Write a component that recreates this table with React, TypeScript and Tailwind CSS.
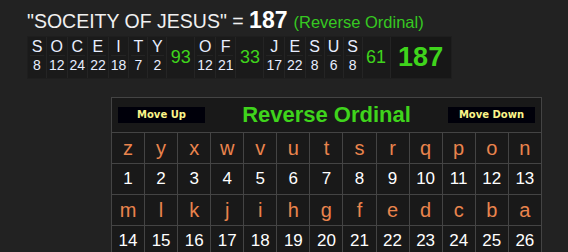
import React from "react";

type Word = { letters: [string, number][]; sum: number };

const words: Word[] = [
  { letters: [["S", 8], ["O", 12], ["C", 24], ["E", 22], ["I", 18], ["T", 7], ["Y", 2]], sum: 93 },
  { letters: [["O", 12], ["F", 21]], sum: 33 },
  { letters: [["J", 17], ["E", 22], ["S", 8], ["U", 6], ["S", 8]], sum: 61 },
];

const rowA = "zyxwvutsrqpon".split("");
const rowB = "mlkjihgfedcba".split("");

const Breakdown = () => (
  <div className="flex bg-[#1a1a1a] border border-[#1e1e1e] w-max">
    {words.map((w, wi) => (
      <React.Fragment key={wi}>
        {w.letters.map(([l, v], i) => (
          <div key={i} className="flex flex-col min-w-[19px] px-[2px] border-r border-[#242424]">
            <span className="h-[19px] leading-[19px] text-center text-[16px] text-[#e8eeff] border-b border-[#242424]">{l}</span>
            <span className="h-[19px] leading-[19px] text-center text-[14px] text-[#e8eeff]">{v}</span>
          </div>
        ))}
        <div className="flex items-center justify-center w-[28px] text-[18px] text-[#3fd41c] border-r border-[#242424]">
          {w.sum}
        </div>
      </React.Fragment>
    ))}
    <div className="flex items-center justify-center w-[60px] bg-[#171717] text-[27px] font-bold text-[#3fd41c]">187</div>
  </div>
);

const Cell = ({ children, orange }: { children: React.ReactNode; orange?: boolean }) => (
  <td
    className={
      "border border-[#444] text-center p-0 " +
      (orange ? "h-[31px] text-[20px] text-[#ea844d]" : "h-[31px] text-[17px] text-white")
    }
  >
    {children}
  </td>
);

export default function App() {
  return (
    <div
      className="w-[568px] h-[252px] overflow-hidden bg-[#222222] pl-[27px] pt-[3px]"
      style={{ fontFamily: "'Liberation Sans', Arial, sans-serif" }}
    >
      <div className="flex items-baseline h-[28px] whitespace-nowrap">
        <span className="text-[19.5px] text-[#f0f0f0]">"SOCEITY OF JESUS" =&nbsp;</span>
        <span className="text-[23px] font-bold text-white">187</span>
        <span className="text-[16.5px] text-[#36c921] ml-[6px]">(Reverse Ordinal)</span>
      </div>
      <div className="mt-[5px]">
        <Breakdown />
      </div>
      <div className="ml-[84px] mt-[18px]">
        <table className="table-fixed border-collapse bg-[#191919] w-[431px]">
          <thead>
            <tr>
              <td colSpan={13} className="border border-[#444] h-[35px] p-0">
                <div className="flex items-center justify-between px-[6px]">
                  <span
                    className="w-[87px] h-[16px] bg-[#00000a] text-[#fbf58a] text-[10px] font-bold leading-[16px] text-center"
                    style={{ fontFamily: "'DejaVu Sans', Verdana, sans-serif" }}
                  >
                    Move Up
                  </span>
                  <span className="text-[22px] font-bold text-[#3fd41c] leading-none">Reverse Ordinal</span>
                  <span
                    className="w-[87px] h-[16px] bg-[#00000a] text-[#fbf58a] text-[10px] font-bold leading-[16px] text-center"
                    style={{ fontFamily: "'DejaVu Sans', Verdana, sans-serif" }}
                  >
                    Move Down
                  </span>
                </div>
              </td>
            </tr>
          </thead>
          <tbody>
            <tr>{rowA.map((l) => <Cell key={l} orange>{l}</Cell>)}</tr>
            <tr>{rowA.map((l, i) => <Cell key={l}>{i + 1}</Cell>)}</tr>
            <tr>{rowB.map((l) => <Cell key={l} orange>{l}</Cell>)}</tr>
            <tr>{rowB.map((l, i) => <Cell key={l}>{i + 14}</Cell>)}</tr>
          </tbody>
        </table>
      </div>
    </div>
  );
}
